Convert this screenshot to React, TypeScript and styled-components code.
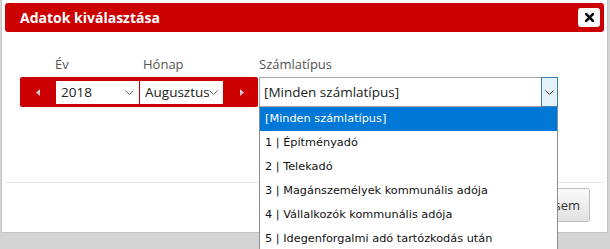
import React from 'react';
import styled, { createGlobalStyle } from 'styled-components';

const RED = '#cc0000';

const GlobalStyle = createGlobalStyle`
  html {
    overflow: hidden;
    background: #d4d4d4;
  }
  body {
    margin: 0;
    padding: 0;
    min-height: 100vh;
    font-family: 'Open Sans', 'Noto Sans', sans-serif;
  }
`;

const Modal = styled.div`
  position: relative;
  box-sizing: border-box;
  width: 607px;
  height: 233px;
  margin-left: 1px;
  background: #ffffff;
  border: 1px solid #c4c4c4;
  border-top: none;
  display: flex;
  flex-direction: column;
`;

const Header = styled.div`
  height: 29px;
  margin: 3px 3px 0;
  padding: 0 4px 0 15px;
  background: ${RED};
  border-radius: 3px;
  display: flex;
  align-items: center;
  justify-content: space-between;
`;

const Title = styled.h1`
  margin: 0;
  font-size: 14px;
  font-weight: 700;
  color: #ffffff;
`;

const CloseButton = styled.button`
  width: 22px;
  height: 19px;
  padding: 0;
  border: none;
  border-radius: 3px;
  background: #ffffff;
  display: flex;
  align-items: center;
  justify-content: center;
`;

const Body = styled.div`
  box-sizing: border-box;
  height: 150px;
  padding: 23px 0 0 18px;
  display: flex;
  align-items: flex-start;
`;

const NavGroup = styled.div`
  display: flex;
  flex-direction: column;
`;

const LabelRow = styled.div`
  display: grid;
  grid-template-columns: 35px 84px 83px 36px;
  margin-bottom: 4px;
`;

const TypeLabelRow = styled.div`
  margin-bottom: 4px;
`;

const Label = styled.span<{ $indent?: number }>`
  display: block;
  font-size: 13px;
  line-height: 18px;
  color: #555555;
  padding-left: ${(p) => p.$indent ?? 0}px;
`;

const NavBar = styled.div`
  width: 238px;
  height: 30px;
  background: ${RED};
  border-radius: 2px;
  display: grid;
  grid-template-columns: 35px 83px 83px 36px;
  column-gap: 1px;
  align-items: center;
`;

const ArrowButton = styled.div`
  display: flex;
  align-items: center;
  justify-content: center;
  height: 100%;
`;

const SmallSelect = styled.div`
  box-sizing: border-box;
  height: 23px;
  background: #ffffff;
  padding: 0 5px;
  display: flex;
  align-items: center;
  justify-content: space-between;
  font-size: 13.5px;
  color: #222222;
  overflow: hidden;
`;

const SelectText = styled.span`
  white-space: nowrap;
  overflow: hidden;
  flex: 1;
`;

const TypeField = styled.div`
  display: flex;
  flex-direction: column;
  margin-left: 1px;
`;

const TypeSelect = styled.div`
  position: relative;
  box-sizing: border-box;
  width: 299px;
  height: 30px;
  border: 1px solid #a8a8a8;
  background: #ffffff;
  display: flex;
  align-items: center;
  font-size: 13.5px;
  color: #222222;
`;

const TypeValue = styled.span`
  flex: 1;
  padding-left: 4px;
`;

const DropToggle = styled.div`
  box-sizing: border-box;
  width: 17px;
  height: 30px;
  margin: -1px -1px -1px 0;
  border: 1px solid #3c7fb1;
  background: #e5f1fb;
  display: flex;
  align-items: center;
  justify-content: center;
`;

const DropList = styled.ul`
  position: absolute;
  top: 29px;
  left: -1px;
  box-sizing: border-box;
  width: 299px;
  margin: 0;
  padding: 0;
  list-style: none;
  background: #ffffff;
  border: 1px solid #8e8e8e;
  border-top: none;
  font-family: 'DejaVu Sans', Verdana, sans-serif;
  font-size: 11.3px;
  z-index: 10;
`;

const DropItem = styled.li<{ $active?: boolean }>`
  height: 24px;
  line-height: 24px;
  padding-left: 5px;
  white-space: nowrap;
  color: ${(p) => (p.$active ? '#ffffff' : '#111111')};
  background: ${(p) => (p.$active ? '#0078d7' : 'transparent')};
`;

const Footer = styled.div`
  margin: 0 3px;
  border-top: 1px solid #e5e5e5;
  padding: 5px 14px 0 0;
  display: flex;
  justify-content: flex-end;
`;

const Button = styled.button`
  height: 34px;
  padding: 0 9px 0 12px;
  border: 1px solid #bdbdbd;
  border-radius: 3px;
  background: linear-gradient(#fbfbfb, #e1e1e1);
  font-family: 'Open Sans', 'Noto Sans', sans-serif;
  font-size: 13px;
  color: #333333;
`;

const Chevron = ({ color = '#666' }: { color?: string }) => (
  <svg width="9" height="5" viewBox="0 0 9 5">
    <path d="M0.5 0.5 L4.5 4.5 L8.5 0.5" fill="none" stroke={color} strokeWidth="1" />
  </svg>
);

const Triangle = ({ dir }: { dir: 'left' | 'right' }) => (
  <svg width="4" height="7" viewBox="0 0 4 7">
    {dir === 'left' ? <path d="M4 0 L0 3.5 L4 7 Z" fill="#c9c9c9" /> : <path d="M0 0 L4 3.5 L0 7 Z" fill="#c9c9c9" />}
  </svg>
);

const options = [
  '[Minden számlatípus]',
  '1 | Építményadó',
  '2 | Telekadó',
  '3 | Magánszemélyek kommunális adója',
  '4 | Vállalkozók kommunális adója',
  '5 | Idegenforgalmi adó tartózkodás után',
];

export default function App() {
  return (
    <>
      <GlobalStyle />
      <Modal>
        <Header>
          <Title>Adatok kiválasztása</Title>
          <CloseButton aria-label="close">
            <svg width="9" height="9" viewBox="0 0 9 9">
              <path d="M1 1 L8 8 M8 1 L1 8" stroke="#111" strokeWidth="2.6" strokeLinecap="square" />
            </svg>
          </CloseButton>
        </Header>
        <Body>
          <NavGroup>
            <LabelRow>
              <span />
              <Label>Év</Label>
              <Label $indent={4}>Hónap</Label>
            </LabelRow>
            <NavBar>
              <ArrowButton>
                <Triangle dir="left" />
              </ArrowButton>
              <SmallSelect>
                <SelectText>2018</SelectText>
                <Chevron />
              </SmallSelect>
              <SmallSelect>
                <SelectText>Augusztus</SelectText>
                <Chevron />
              </SmallSelect>
              <ArrowButton>
                <Triangle dir="right" />
              </ArrowButton>
            </NavBar>
          </NavGroup>
          <TypeField>
            <TypeLabelRow>
              <Label>Számlatípus</Label>
            </TypeLabelRow>
            <TypeSelect>
              <TypeValue>[Minden számlatípus]</TypeValue>
              <DropToggle>
                <Chevron color="#333" />
              </DropToggle>
              <DropList>
                {options.map((o, i) => (
                  <DropItem key={o} $active={i === 0}>
                    {o}
                  </DropItem>
                ))}
              </DropList>
            </TypeSelect>
          </TypeField>
        </Body>
        <Footer>
          <Button>Mégsem</Button>
        </Footer>
      </Modal>
    </>
  );
}
